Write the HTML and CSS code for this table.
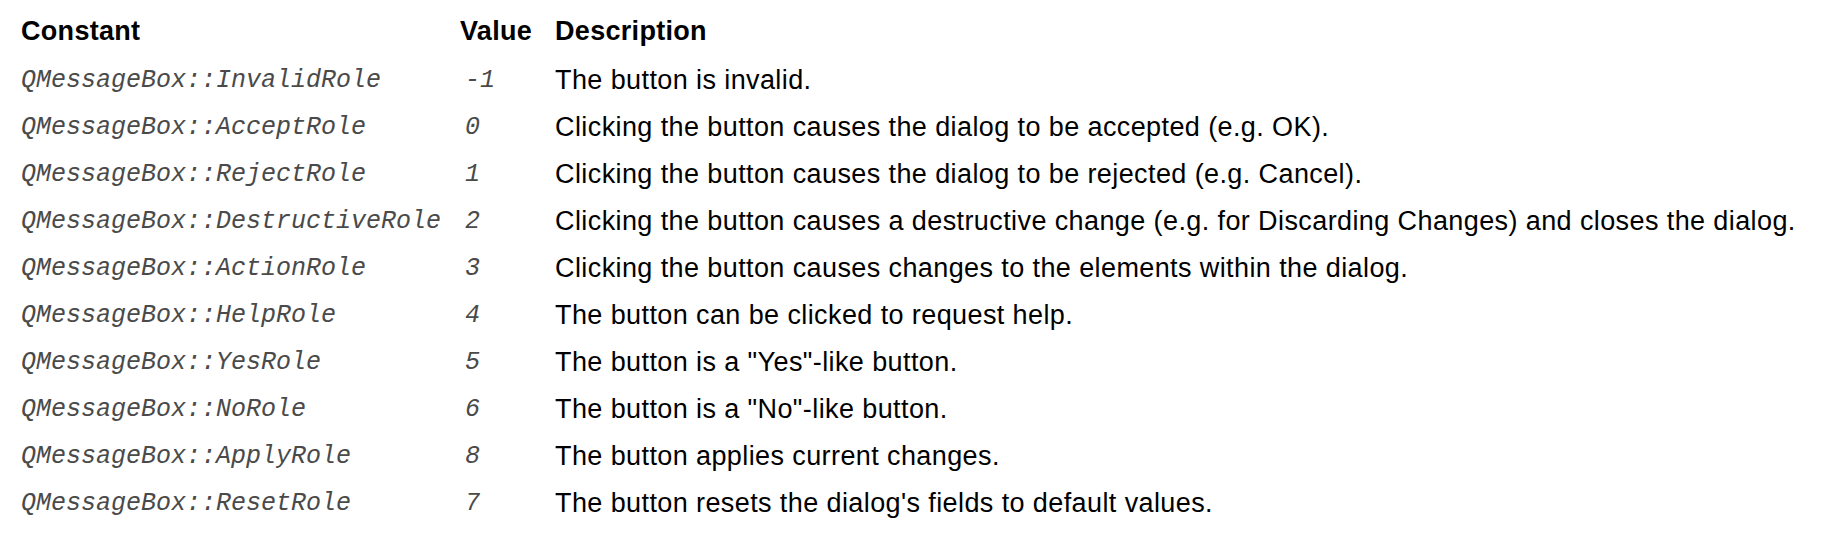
FILE: index.html
```html
<!DOCTYPE html>
<html>
<head>
<meta charset="utf-8">
<link rel="stylesheet" href="styles.css">
</head>
<body>
<table class="roles">
  <thead>
    <tr><th class="c-const">Constant</th><th class="c-val">Value</th><th class="c-desc">Description</th></tr>
  </thead>
  <tbody>
    <tr><td class="mono">QMessageBox::InvalidRole</td><td class="mono val">-1</td><td>The button is invalid.</td></tr>
    <tr><td class="mono">QMessageBox::AcceptRole</td><td class="mono val">0</td><td>Clicking the button causes the dialog to be accepted (e.g. OK).</td></tr>
    <tr><td class="mono">QMessageBox::RejectRole</td><td class="mono val">1</td><td>Clicking the button causes the dialog to be rejected (e.g. Cancel).</td></tr>
    <tr><td class="mono">QMessageBox::DestructiveRole</td><td class="mono val">2</td><td>Clicking the button causes a destructive change (e.g. for Discarding Changes) and closes the dialog.</td></tr>
    <tr><td class="mono">QMessageBox::ActionRole</td><td class="mono val">3</td><td>Clicking the button causes changes to the elements within the dialog.</td></tr>
    <tr><td class="mono">QMessageBox::HelpRole</td><td class="mono val">4</td><td>The button can be clicked to request help.</td></tr>
    <tr><td class="mono">QMessageBox::YesRole</td><td class="mono val">5</td><td>The button is a "Yes"-like button.</td></tr>
    <tr><td class="mono">QMessageBox::NoRole</td><td class="mono val">6</td><td>The button is a "No"-like button.</td></tr>
    <tr><td class="mono">QMessageBox::ApplyRole</td><td class="mono val">8</td><td>The button applies current changes.</td></tr>
    <tr><td class="mono">QMessageBox::ResetRole</td><td class="mono val">7</td><td>The button resets the dialog's fields to default values.</td></tr>
  </tbody>
</table>
</body>
</html>
```
FILE: styles.css
```css
html, body {
  margin: 0;
  background: #ffffff;
}
body {
  padding: 8px 0 0 12px;
  font-family: "Liberation Sans", Arial, sans-serif;
  color: #000000;
}
.roles {
  border-collapse: collapse;
}
.roles th {
  font-size: 27px;
  font-weight: bold;
  text-align: left;
  padding: 7px 9px 10px 9px;
  line-height: 32px;
  letter-spacing: 0.3px;
}
.roles th.c-val {
  padding-right: 14px;
}
.roles td {
  font-size: 27px;
  line-height: 29px;
  padding: 9px 9px;
  vertical-align: top;
  white-space: nowrap;
  letter-spacing: 0.4px;
}
.roles td.mono {
  font-family: "Liberation Mono", "Courier New", monospace;
  font-size: 25px;
  font-style: italic;
  letter-spacing: 0;
  color: #4a4a4a;
}
.roles td.val {
  padding-left: 14px;
}
.c-const { width: 421px; }
```
